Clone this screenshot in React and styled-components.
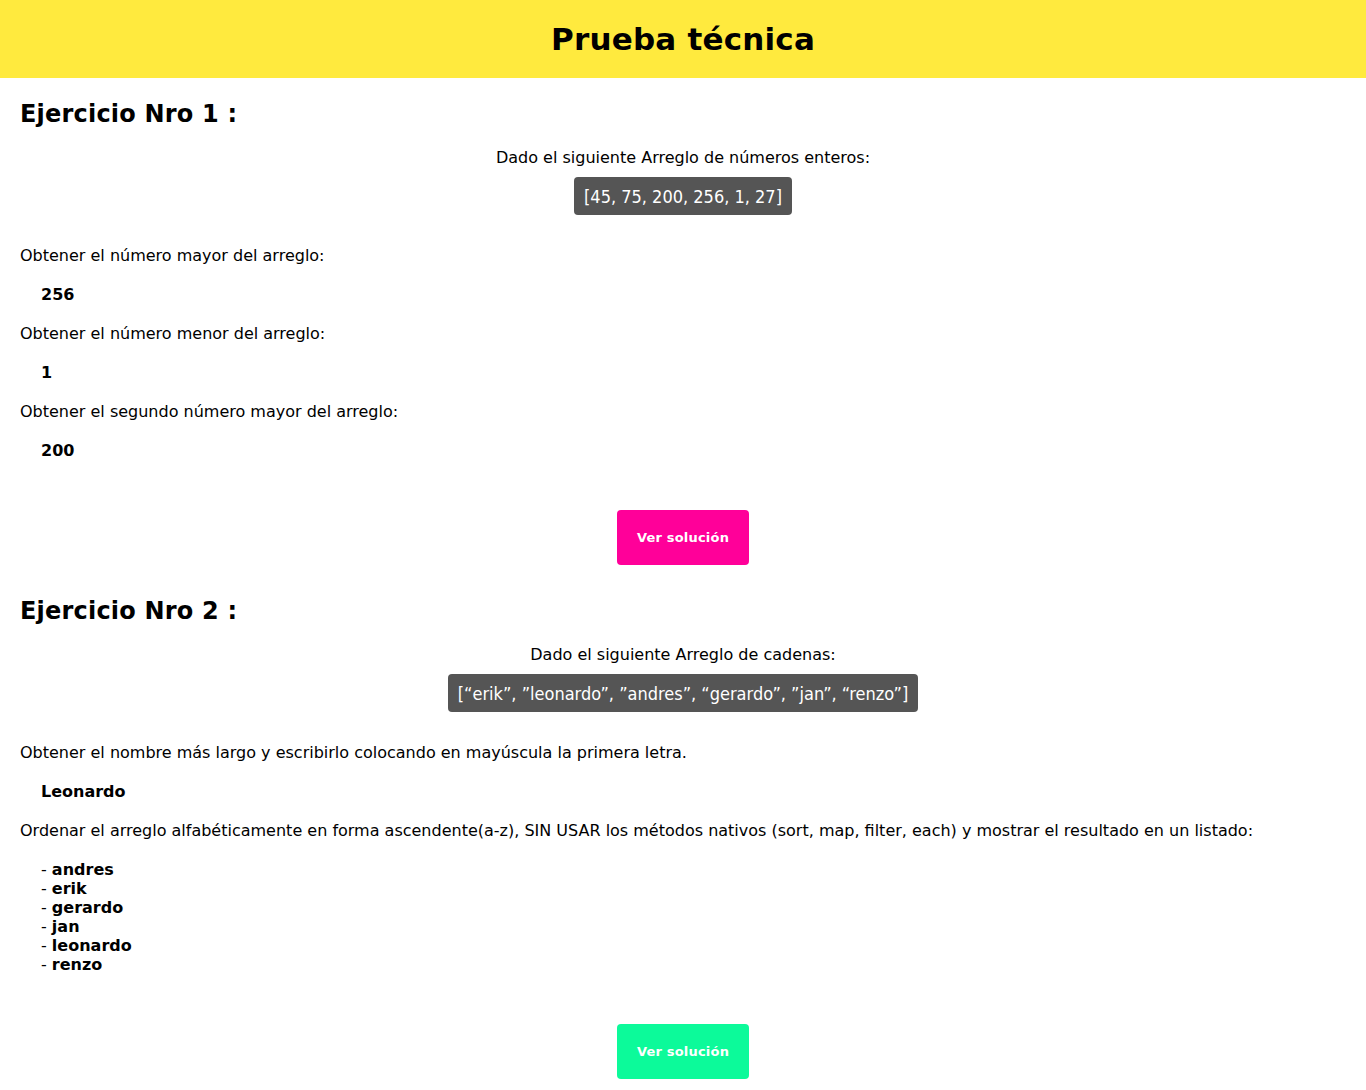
import React from "react";
import styled, { createGlobalStyle } from "styled-components";

const GlobalStyle = createGlobalStyle`
	body {
		margin: 0;
		background: #ffffff;
		font-family: "DejaVu Sans", sans-serif;
		color: #000000;
	}
`;

const numbers = [45, 75, 200, 256, 1, 27];
const sorted = ["andres", "erik", "gerardo", "jan", "leonardo", "renzo"];

const App = () => {
	return (
		<>
			<GlobalStyle />
			<Header>
				<Title>Prueba técnica</Title>
			</Header>

			{/* ejercicio 1 */}
			<Section top="23px">
				<Heading>Ejercicio Nro 1 :</Heading>
				<Center>
					<Text>Dado el siguiente Arreglo de números enteros:</Text>
					<Code>[{numbers.join(", ")}]</Code>
				</Center>
				<Rows>
					<Text>Obtener el número mayor del arreglo:</Text>
					<Answer>256</Answer>
					<Text>Obtener el número menor del arreglo:</Text>
					<Answer>1</Answer>
					<Text>Obtener el segundo número mayor del arreglo:</Text>
					<Answer>200</Answer>
				</Rows>
				<ButtonRow>
					<Button background="#ff0099">Ver solución</Button>
				</ButtonRow>
			</Section>

			{/* ejercicio 2 */}
			<Section top="33px">
				<Heading>Ejercicio Nro 2 :</Heading>
				<Center>
					<Text>Dado el siguiente Arreglo de cadenas:</Text>
					<Code>[“erik”, ”leonardo”, ”andres”, “gerardo”, ”jan”, “renzo”]</Code>
				</Center>
				<Rows>
					<Text>Obtener el nombre más largo y escribirlo colocando en mayúscula la primera letra.</Text>
					<Answer>Leonardo</Answer>
					<Text>Ordenar el arreglo alfabéticamente en forma ascendente(a-z), SIN USAR los métodos nativos (sort, map, filter, each) y mostrar el resultado en un listado:</Text>
					<List>
						{sorted.map((n) => (
							<li key={n}>
								- <b>{n}</b>
							</li>
						))}
					</List>
				</Rows>
				<ButtonRow>
					<Button background="#0cfa9a">Ver solución</Button>
				</ButtonRow>
			</Section>
		</>
	);
};

export default App;

const Header = styled.header`
	height: 78px;
	background: #ffea3e;
	display: flex;
	justify-content: center;
	align-items: center;
`;

const Title = styled.h1`
	margin: 0;
	font-size: 31px;
	font-weight: bold;
	letter-spacing: 0.2px;
`;

const Section = styled.section`
	padding: ${(props) => props.top} 20px 0 20px;
	display: flex;
	flex-direction: column;
`;

const Heading = styled.h2`
	margin: 0;
	font-size: 24px;
	line-height: 27px;
	font-weight: bold;
	letter-spacing: 0.2px;
`;

const Center = styled.div`
	display: flex;
	flex-direction: column;
	align-items: center;
	gap: 10px;
	margin-top: 20px;
`;

const Text = styled.p`
	margin: 0;
	font-size: 16px;
	line-height: 19px;
`;

const Code = styled.div`
	background: #555555;
	color: #ffffff;
	border-radius: 4px;
	height: 38px;
	padding: 0 10px;
	display: flex;
	align-items: center;
	font-family: "DejaVu Sans Condensed", "DejaVu Sans", sans-serif;
	font-stretch: semi-condensed;
	font-size: 18px;
`;

const Rows = styled.div`
	display: flex;
	flex-direction: column;
	gap: 20px;
	margin-top: 31px;
`;

const Answer = styled.div`
	padding-left: 21px;
	font-size: 16px;
	line-height: 19px;
	font-weight: bold;
`;

const List = styled.ul`
	list-style: none;
	margin: 0;
	padding-left: 21px;
	font-size: 16px;
	line-height: 19px;
`;

const ButtonRow = styled.div`
	display: flex;
	justify-content: center;
	margin-top: 50px;
`;

const Button = styled.button`
	width: 132px;
	height: 55px;
	border: none;
	border-radius: 4px;
	background: ${(props) => props.background};
	color: #ffffff;
	font-family: "DejaVu Sans", sans-serif;
	font-size: 13px;
	font-weight: bold;
	letter-spacing: 0.2px;
	cursor: pointer;
`;
